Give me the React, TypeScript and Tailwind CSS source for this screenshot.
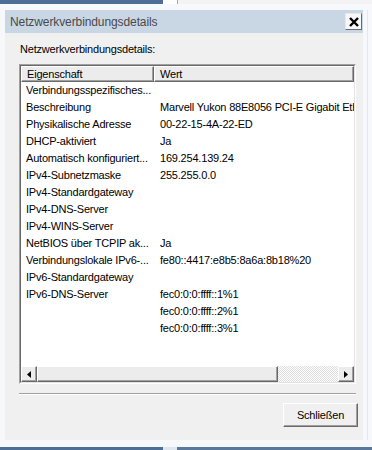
const rows: [string, string][] = [
  ["Verbindungsspezifisches...", ""],
  ["Beschreibung", "Marvell Yukon 88E8056 PCI-E Gigabit Ethernet-Controller"],
  ["Physikalische Adresse", "00-22-15-4A-22-ED"],
  ["DHCP-aktiviert", "Ja"],
  ["Automatisch konfiguriert...", "169.254.139.24"],
  ["IPv4-Subnetzmaske", "255.255.0.0"],
  ["IPv4-Standardgateway", ""],
  ["IPv4-DNS-Server", ""],
  ["IPv4-WINS-Server", ""],
  ["NetBIOS über TCPIP ak...", "Ja"],
  ["Verbindungslokale IPv6-...", "fe80::4417:e8b5:8a6a:8b18%20"],
  ["IPv6-Standardgateway", ""],
  ["IPv6-DNS-Server", "fec0:0:0:ffff::1%1"],
  ["", "fec0:0:0:ffff::2%1"],
  ["", "fec0:0:0:ffff::3%1"],
];

const raised =
  "border border-t-white border-l-white border-b-[#696969] border-r-[#696969] shadow-[inset_-1px_-1px_0_#a0a0a0] bg-[#ececec]";

function Arrow({ dir }: { dir: "left" | "right" }) {
  return (
    <div className={`flex h-[16px] w-[16px] shrink-0 items-center justify-center ${raised}`}>
      <svg width="4" height="7" viewBox="0 0 4 7">
        {dir === "left" ? <path d="M4 0 L0 3.5 L4 7 Z" fill="#000" /> : <path d="M0 0 L4 3.5 L0 7 Z" fill="#000" />}
      </svg>
    </div>
  );
}

export default function App() {
  return (
    <div className="flex h-[450px] w-[372px] flex-col overflow-hidden bg-[#f6f8fb] font-['Liberation_Sans',Arial,sans-serif] text-[11px] tracking-[-0.2px] text-black">
      {/* taskbar strip behind */}
      <div className="flex h-[4px] shrink-0">
        <div className="w-[163px] bg-[#4e6f95]" />
        <div className="w-[14px] bg-white" />
        <div className="w-px bg-[#a8a8a8]" />
        <div className="flex-1 bg-[#f3f3f3]" />
      </div>
      <div className="h-[6px] shrink-0" />

      <div className="flex flex-1">
        <div className="w-[5px] shrink-0" />
        <div className="flex w-[358px] flex-col">
          <div className="flex h-[23px] items-center justify-between bg-[#c9d6e4] pl-[5px] pr-[1px]">
            <span className="text-[12px] tracking-[-0.1px] text-[#4a4a4a]">Netzwerkverbindungsdetails</span>
            <div className="flex h-[17px] w-[17px] items-center justify-center border border-t-[#e8e8e8] border-l-[#e8e8e8] border-b-[#6a6a6a] border-r-[#6a6a6a] bg-[#f7f7f7]">
              <svg width="10" height="10" viewBox="0 0 10 10">
                <path d="M1 1 L9 9 M9 1 L1 9" stroke="#000" strokeWidth="2.4" />
              </svg>
            </div>
          </div>

          <div className="flex h-[407px] flex-col bg-[#f0f0f0] pl-[14px] pr-[5px]">
            <div className="mt-[10px] h-[13px] pl-[1px] leading-[13px]">Netzwerkverbindungsdetails:</div>

            <div className="mt-[8px] mr-[2px] flex h-[320px] flex-col border border-t-[#a0a0a0] border-l-[#a0a0a0] border-b-white border-r-white">
              <div className="flex flex-1 flex-col overflow-hidden border border-t-[#696969] border-l-[#696969] border-b-[#e3e3e3] border-r-[#e3e3e3] bg-white">
                <div className="flex h-[16px] shrink-0">
                  <div className={`w-[133px] shrink-0 pl-[5px] leading-[14px] ${raised}`}>Eigenschaft</div>
                  <div className={`flex-1 pl-[5px] leading-[14px] ${raised}`}>Wert</div>
                </div>
                <div className="flex flex-1 flex-col overflow-hidden">
                  {rows.map(([k, v], i) => (
                    <div key={i} className="flex h-[17px] shrink-0 items-center whitespace-nowrap">
                      <div className="w-[133px] shrink-0 overflow-hidden pl-[5px]">{k}</div>
                      <div className="pl-[6px]">{v}</div>
                    </div>
                  ))}
                </div>
                <div className="flex h-[16px] shrink-0">
                  <Arrow dir="left" />
                  <div className={`w-[241px] shrink-0 ${raised}`} />
                  <div className="flex-1 bg-[repeating-conic-gradient(#ffffff_0_25%,#dcdcdc_0_50%)] bg-[length:2px_2px]" />
                  <Arrow dir="right" />
                </div>
              </div>
            </div>

            <div className="mt-[9px] mr-[2px] h-[2px] border-t border-t-[#a0a0a0] border-b border-b-white" />

            <div className="mt-[8px] flex justify-end">
              <div className="flex h-[24px] w-[75px] items-center justify-center border border-t-white border-l-white border-b-[#696969] border-r-[#696969] bg-[#f0f0f0] shadow-[inset_-1px_-1px_0_#a0a0a0]">
                Schließen
              </div>
            </div>
          </div>
        </div>
        <div className="flex w-[9px] shrink-0">
          <div className="w-[4px]" />
          <div className="w-px bg-[#e4e8ee]" />
        </div>
      </div>

      <div className="h-[7px] shrink-0" />
      <div className="flex h-[3px] shrink-0">
        <div className="w-[163px] bg-[#4e6f95]" />
        <div className="w-[14px] bg-[#dfe6ee]" />
        <div className="flex-1 bg-[#5a7899]" />
      </div>
    </div>
  );
}
